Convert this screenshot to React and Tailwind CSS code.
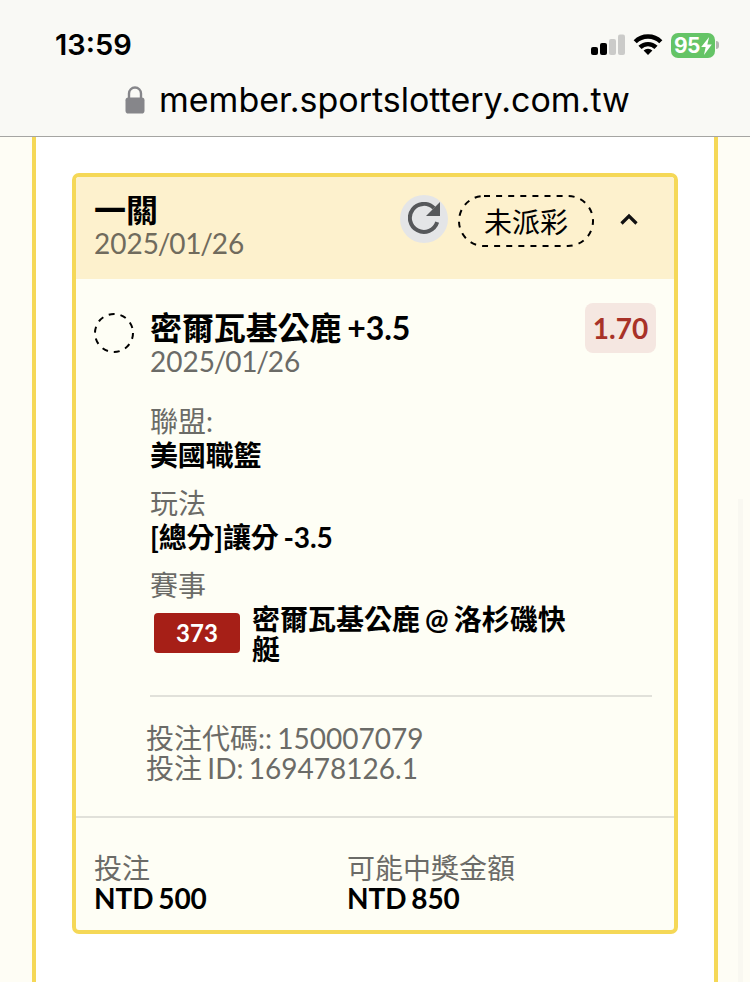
import React from "react";

const details = [
	{ label: '聯盟:', value: '美國職籃' },
	{ label: '玩法', value: '[總分]讓分 -3.5' },
];

const totals = [
	{ label: '投注', value: 'NTD 500' },
	{ label: '可能中獎金額', value: 'NTD 850' },
];

const SignalIcon = () => (
	<svg width="34" height="22" viewBox="0 0 34 22">
		<rect x="0" y="13" width="7" height="8" rx="2" fill="#000" />
		<rect x="9" y="9" width="7" height="12" rx="2" fill="#000" />
		<rect x="18" y="5" width="7" height="16" rx="2" fill="#cbcbc9" />
		<rect x="27" y="0.5" width="7" height="20.5" rx="2" fill="#cbcbc9" />
	</svg>
);

const WifiIcon = () => (
	<svg width="30" height="22" viewBox="0 0 30 22" fill="none" stroke="#000" strokeWidth="4.4">
		<path d="M2.2 7.8a18.2 18.2 0 0 1 25.6 0" />
		<path d="M7 13.4a11.3 11.3 0 0 1 16 0" />
		<path d="M15 21l-4.4-4.4a6.2 6.2 0 0 1 8.8 0z" fill="#000" stroke="none" />
	</svg>
);

const LockIcon = () => (
	<svg width="20" height="28" viewBox="0 0 20 28">
		<path d="M4 13V7.5a6 6 0 0 1 12 0V13" fill="none" stroke="#86868a" strokeWidth="2.4" />
		<rect x="0.5" y="11.5" width="19" height="16" rx="2.8" fill="#86868a" />
	</svg>
);

const RefreshIcon = () => (
	<svg width="32" height="32" viewBox="0 0 32 32">
		<path d="M29.2 20.2A14 14 0 1 1 26 6.2" fill="none" stroke="#56585b" strokeWidth="4" />
		<path d="M32 0v14H18z" fill="#56585b" />
	</svg>
);

const DateText = ({ value }) => {
	const [year, month, day] = value.split('/');
	return (
		<>
			{year}<span className="-mx-[1.25px]">/</span>{month}<span className="-mx-[1.25px]">/</span>{day}
		</>
	);
};

const BrowserBar = () => (
	<header className="h-[137px] shrink-0 border-b border-[#a5a5a2] bg-[#f9f9f5] font-[Inter,sans-serif] text-black">
		<div className="flex h-[60px] items-end justify-between pl-[55px] pr-[31px]">
			<span className="text-[29px] leading-[30px] font-semibold">13:59</span>
			<div className="flex h-[30px] items-center">
				<SignalIcon />
				<span className="w-2" />
				<WifiIcon />
				<span className="ml-2 flex h-[25px] w-[44px] items-center justify-center rounded-[7px] bg-[#65c466] pt-px text-[21px] leading-6 font-bold tracking-[-0.5px] text-white">
					95
					<svg className="ml-px" width="11" height="18" viewBox="0 0 10 17" fill="#fff">
						<path d="M7.5 0L0 9.5h4.2L2.6 17 10 7H5.8z" />
					</svg>
				</span>
				<span className="ml-px h-2 w-[3px] rounded-r-full bg-[#b5b5b3]" />
			</div>
		</div>
		<div className="mt-5 flex h-10 items-center pl-[125px]">
			<LockIcon />
			<span className="ml-[14px] text-[34px] leading-10">member.sportslottery.com.tw</span>
		</div>
	</header>
);

const TicketHeader = () => (
	<div className="flex h-[102px] items-start justify-between bg-[#fdf1cd] pl-[18px] pr-9">
		<div className="pt-[17px]">
			<h2 className="text-[32px] leading-8 font-bold text-black">一關</h2>
			<p className="mt-0.5 leading-[30px] text-[#706b5d]"><DateText value="2025/01/26" /></p>
		</div>
		<div className="flex items-start pt-[18px]">
			<button type="button" className="flex size-12 items-center justify-center rounded-full bg-[#e4e5e7] pb-0.5">
				<RefreshIcon />
			</button>
			<span className="relative ml-2.5 flex h-[52px] w-[136px] items-center justify-center pt-0.5 text-black">
				<svg className="absolute inset-0" width="136" height="52" viewBox="0 0 136 52" fill="none">
					<rect x="1" y="1" width="134" height="50" rx="25" stroke="#000" strokeWidth="2" strokeDasharray="6 6.1" />
				</svg>
				未派彩
			</span>
			<svg className="mt-[18px] ml-[26px]" width="18" height="12" viewBox="0 0 18 12" fill="none" stroke="#111" strokeWidth="3.2">
				<path d="M1.5 10.5L9 3l7.5 7.5" />
			</svg>
		</div>
	</div>
);

const TicketBody = () => (
	<div className="h-[537px] pt-6 pl-[18px] pr-[18px]">
		<div className="flex">
			<svg className="mt-2.5" width="40" height="40" viewBox="0 0 40 40" fill="none">
				<circle cx="20" cy="20" r="19" stroke="#000" strokeWidth="2" strokeDasharray="6 5.94" />
			</svg>
			<div className="ml-4 flex-1 pt-[9px]">
				<h3 className="text-[32px] leading-8 font-bold tracking-[-0.1px] text-black">密爾瓦基公鹿 +3.5</h3>
				<p className="mt-0.5 leading-[30px]"><DateText value="2025/01/26" /></p>
			</div>
			<span className="flex h-[50px] w-[71px] items-center justify-center rounded-lg bg-[#f5e7e1] font-bold text-[#a83228]">
				1.70
			</span>
		</div>

		<div className="pl-14 pt-[29px]">
			{details.map((item) => (
				<dl key={item.label} className="mb-[15px]">
					<dt className="leading-8">{item.label}</dt>
					<dd className="mt-px leading-[34px] font-bold tracking-[-0.15px] text-black">{item.value}</dd>
				</dl>
			))}
			<p className="leading-8">賽事</p>
			<div className="flex items-start pl-1 pt-[3px]">
				<span className="mt-[9px] flex h-10 w-[86px] items-center justify-center rounded-[4px] bg-[#a61f17] text-[24px] font-bold text-white">
					373
				</span>
				<p className="ml-3 w-[330px] leading-[30px] font-bold text-black">密爾瓦基公鹿 @ 洛杉磯快艇</p>
			</div>
			<hr className="mt-[31px] mr-1 border-t-2 border-[#e1e1da]" />
		</div>

		<div className="pl-[52px] pt-[26px] leading-[30px]">
			<p>投注代碼:: 150007079</p>
			<p>投注 ID: 169478126.1</p>
		</div>
	</div>
);

const TicketFooter = () => (
	<div className="flex h-[114px] border-t-2 border-[#e1e1da] pt-[35px] pl-[18px]">
		{totals.map((item) => (
			<div key={item.label} className="w-[253px] leading-[30px]">
				<p>{item.label}</p>
				<p className="font-bold tracking-[-0.1px] text-black">{item.value}</p>
			</div>
		))}
	</div>
);

export default function App() {
	return (
		<div className="flex h-[982px] w-[750px] flex-col overflow-hidden bg-[#fefdf5]">
			<BrowserBar />
			<div className="flex flex-1 pl-8">
				<main className="w-[686px] border-x-4 border-[#f5d857] bg-white px-9 pt-9 font-[Lato,'Noto_Sans_CJK_TC',sans-serif] text-[28px] text-[#6b6b67] [word-spacing:-1.8px]">
					<article lang="zh-Hant" className="h-[761px] overflow-hidden rounded-[7px] border-4 border-[#f5d857] bg-[#fefef5]">
						<TicketHeader />
						<TicketBody />
						<TicketFooter />
					</article>
				</main>
				<div className="ml-5 mt-[362px] w-[5px] bg-[#f9f8f1]" />
			</div>
		</div>
	);
}
